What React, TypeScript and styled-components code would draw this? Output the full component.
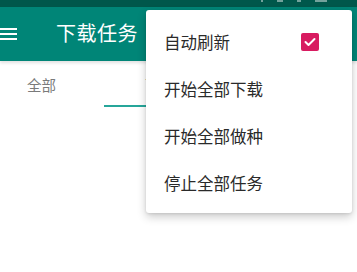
import React from 'react';
import styled, { createGlobalStyle } from 'styled-components';

const GlobalStyle = createGlobalStyle`
  html, body {
    margin: 0;
    padding: 0;
    background: #ffffff;
    font-family: Roboto, "Noto Sans CJK SC", sans-serif;
  }
`;

const menuItems = ['自动刷新', '开始全部下载', '开始全部做种', '停止全部任务'];

const App = () => {
  return (
    <Screen>
      <GlobalStyle />
      <StatusBar>
        <StatusIcon $w={2} />
        <StatusIcon $w={6} />
        <StatusIcon $w={4} />
        <StatusIcon $w={12} />
      </StatusBar>
      <Toolbar>
        <MenuIcon width="17" height="14" viewBox="0 0 17 14">
          <rect x="0" y="1" width="17" height="2" fill="#ffffff" />
          <rect x="0" y="6" width="17" height="2" fill="#ffffff" />
          <rect x="0" y="11" width="17" height="2" fill="#ffffff" />
        </MenuIcon>
        <Title>下载任务</Title>
      </Toolbar>
      <Tabs>
        <Tab $width={104} $pad={27}>全部</Tab>
        <Tab $width={140} $pad={41} $active>下载中</Tab>
        <Tab $width={113} $pad={30}>已完成</Tab>
      </Tabs>

      <Popup>
        {menuItems.map((label, i) => (
          <PopupItem key={label}>
            <span>{label}</span>
            {i === 0 && (
              <CheckBox>
                <svg width="12" height="10" viewBox="0 0 12 10">
                  <path d="M1.5 5 L4.5 8 L10.5 2" stroke="#ffffff" strokeWidth="2" fill="none" strokeLinecap="round" strokeLinejoin="round" />
                </svg>
              </CheckBox>
            )}
          </PopupItem>
        ))}
      </Popup>
    </Screen>
  );
};

export default App;

const Screen = styled.div`
  position: relative;
  width: 357px;
  height: 272px;
  overflow: hidden;
  background: #ffffff;
`;

const StatusBar = styled.div`
  height: 7px;
  background: #00574b;
  display: flex;
  justify-content: flex-end;
  align-items: flex-start;
  gap: 14px;
  padding-right: 30px;
`;

const StatusIcon = styled.div<{ $w: number }>`
  width: ${(p) => p.$w}px;
  height: 2px;
  background: rgba(255, 255, 255, 0.45);
`;

const Toolbar = styled.div`
  height: 54px;
  background: #008577;
  display: flex;
  align-items: center;
  box-shadow: 0 2px 3px rgba(0, 0, 0, 0.12);
  position: relative;
  z-index: 1;
`;

const MenuIcon = styled.svg`
  margin-top: -1px;
  flex-shrink: 0;
`;

const Title = styled.div`
  margin-left: 39px;
  color: #ffffff;
  font-size: 20px;
  letter-spacing: 0.5px;
  margin-top: -3px;
`;

const Tabs = styled.div`
  display: flex;
  height: 46px;
`;

const Tab = styled.div<{ $width: number; $pad: number; $active?: boolean }>`
  width: ${(p) => p.$width}px;
  flex-shrink: 0;
  box-sizing: border-box;
  padding-left: ${(p) => p.$pad}px;
  display: flex;
  align-items: center;
  padding-top: 2px;
  font-size: 14.5px;
  color: ${(p) => (p.$active ? '#008577' : '#7a7a7a')};
  border-bottom: 2px solid ${(p) => (p.$active ? '#26a69a' : 'transparent')};
`;

const Popup = styled.div`
  position: absolute;
  left: 146px;
  top: 10px;
  width: 206px;
  padding: 8px 0 7px;
  background: #ffffff;
  border-radius: 3px;
  box-shadow: 0 4px 10px rgba(0, 0, 0, 0.2), 0 1px 3px rgba(0, 0, 0, 0.1);
  z-index: 2;
`;

const PopupItem = styled.div`
  height: 47px;
  display: flex;
  align-items: center;
  justify-content: space-between;
  padding: 0 33px 0 18px;
  font-size: 16.5px;
  color: #2a2a2a;
`;

const CheckBox = styled.div`
  width: 18px;
  height: 18px;
  border-radius: 2px;
  background: #d81b60;
  display: flex;
  align-items: center;
  justify-content: center;
`;
